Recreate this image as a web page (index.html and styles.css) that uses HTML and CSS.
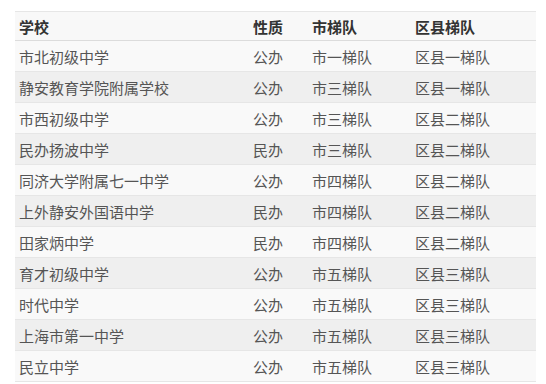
FILE: index.html
```html
<!DOCTYPE html>
<html lang="zh">
<head>
<meta charset="utf-8">
<link rel="stylesheet" href="styles.css">
</head>
<body>
<table class="rank">
  <colgroup>
    <col class="c1"><col class="c2"><col class="c3"><col class="c4">
  </colgroup>
  <thead>
    <tr><th>学校</th><th>性质</th><th>市梯队</th><th>区县梯队</th></tr>
  </thead>
  <tbody>
    <tr><td>市北初级中学</td><td>公办</td><td>市一梯队</td><td>区县一梯队</td></tr>
    <tr><td>静安教育学院附属学校</td><td>公办</td><td>市三梯队</td><td>区县一梯队</td></tr>
    <tr><td>市西初级中学</td><td>公办</td><td>市三梯队</td><td>区县二梯队</td></tr>
    <tr><td>民办扬波中学</td><td>民办</td><td>市三梯队</td><td>区县二梯队</td></tr>
    <tr><td>同济大学附属七一中学</td><td>公办</td><td>市四梯队</td><td>区县二梯队</td></tr>
    <tr><td>上外静安外国语中学</td><td>民办</td><td>市四梯队</td><td>区县二梯队</td></tr>
    <tr><td>田家炳中学</td><td>民办</td><td>市四梯队</td><td>区县二梯队</td></tr>
    <tr><td>育才初级中学</td><td>公办</td><td>市五梯队</td><td>区县三梯队</td></tr>
    <tr><td>时代中学</td><td>公办</td><td>市五梯队</td><td>区县三梯队</td></tr>
    <tr><td>上海市第一中学</td><td>公办</td><td>市五梯队</td><td>区县三梯队</td></tr>
    <tr><td>民立中学</td><td>公办</td><td>市五梯队</td><td>区县三梯队</td></tr>
  </tbody>
</table>
</body>
</html>
```
FILE: styles.css
```css
html, body {
  margin: 0;
  background: #ffffff;
}
body {
  padding: 11px 10px 0 15px;
  font-family: "Noto Sans CJK SC", "Noto Sans", sans-serif;
}
.rank {
  width: 521px;
  border-collapse: collapse;
  table-layout: fixed;
  font-size: 15px;
}
.c1 { width: 234px; }
.c2 { width: 59px; }
.c3 { width: 103px; }
.c4 { width: 125px; }
.rank th, .rank td {
  text-align: left;
  padding: 0 4px;
  white-space: nowrap;
  border-top: 1px solid #e6e6e6;
}
.rank th {
  height: 28px;
  font-weight: bold;
  color: #333333;
  background: #f8f8f8;
  border-bottom: 1px solid #dcdcdc;
}
.rank td {
  height: 30px;
  color: #555555;
}
.rank tbody tr:nth-child(odd) td { background: #f9f9f9; }
.rank tbody tr:nth-child(even) td { background: #efefef; }
.rank tbody tr:last-child td { border-bottom: 1px solid #e6e6e6; }
```
